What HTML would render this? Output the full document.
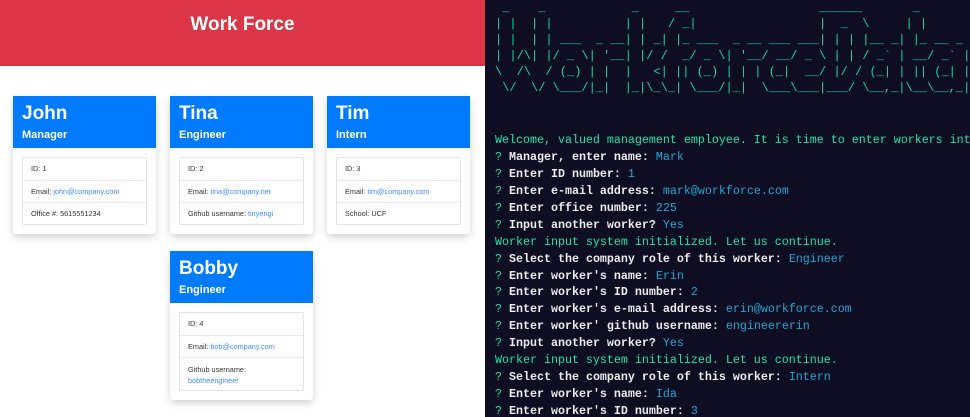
<!DOCTYPE html>
<html><head><meta charset="utf-8"><style>
*{margin:0;padding:0;box-sizing:border-box}
body{width:970px;height:417px;overflow:hidden;background:#fff;font-family:"Liberation Sans",sans-serif;position:relative}
.left{position:absolute;left:0;top:0;width:485px;height:417px;background:#fff}
.hdr{position:absolute;left:0;top:0;width:485px;height:66px;background:#dc3545;color:#fff;font-weight:bold;font-size:19px;text-align:center;line-height:50px}
.card{position:absolute;width:143px;background:#fff;box-shadow:0 3px 8px rgba(0,0,0,.18);border-radius:3px}
.ch{background:#007bff;color:#fff;padding:7px 9px 5px;height:52px}
.ch .n{font-size:19px;font-weight:bold;line-height:22px}
.ch .r{font-size:11px;font-weight:bold;margin-top:4px}
.cb{padding:9px 9px 9px}
ul{list-style:none;border:1px solid #e3e3e3;border-radius:2px}
li{font-size:7.3px;color:#333;padding:0 8px;height:22px;line-height:22px;border-top:1px solid #e8e8e8}
li:first-child{border-top:none}
li.t{height:33px;line-height:11px;padding-top:6px}
a{color:#3b8cff;text-decoration:none}
.term{position:absolute;left:485px;top:0;width:485px;height:417px;background:#0f0d22;font-family:"Liberation Mono",monospace;font-size:11.67px;white-space:pre;overflow:hidden}
.art{position:absolute;left:10px;top:0px;line-height:16px;font-size:12px;color:#17d9a0}
.log{position:absolute;left:10px;top:132px;line-height:16.94px}
.g{color:#1ce6a8}.w{color:#ececec;font-weight:bold}.c{color:#23a6d5}
</style></head><body>
<div class="left">
<div class="hdr">Work Force</div>
<div class="card" style="left:13px;top:96px"><div class="ch"><div class="n">John</div><div class="r">Manager</div></div><div class="cb"><ul><li>ID: 1</li><li>Email: <a>john@company.com</a></li><li>Office #: 5615551234</li></ul></div></div>
<div class="card" style="left:170px;top:96px"><div class="ch"><div class="n">Tina</div><div class="r">Engineer</div></div><div class="cb"><ul><li>ID: 2</li><li>Email: <a>tina@company.net</a></li><li>Github username: <a>tinyengi</a></li></ul></div></div>
<div class="card" style="left:327px;top:96px"><div class="ch"><div class="n">Tim</div><div class="r">Intern</div></div><div class="cb"><ul><li>ID: 3</li><li>Email: <a>tim@company.com</a></li><li>School: UCF</li></ul></div></div>
<div class="card" style="left:170px;top:251px"><div class="ch"><div class="n">Bobby</div><div class="r">Engineer</div></div><div class="cb"><ul><li>ID: 4</li><li>Email: <a>bob@company.com</a></li><li class="t">Github username:<br><a>bobtheengineer</a></li></ul></div></div>
</div>
<div class="term">
<div class="art"> _    _            _     __                  ______       _        
| |  | |          | |   / _|                 |  _  \     | |       
| |  | | ___  _ __| | _| |_ ___  _ __ ___ ___| | | |__ _| |_ __ _ 
| |/\| |/ _ \| '__| |/ /  _/ _ \| '__/ __/ _ \ | | / _` | __/ _` |
\  /\  / (_) | |  |   <| || (_) | | | (_|  __/ |/ / (_| | || (_| |
 \/  \/ \___/|_|  |_|\_\_| \___/|_|  \___\___|___/ \__,_|\__\__,_|</div>
<div class="log"><span class="g">Welcome, valued management employee. It is time to enter workers into the system.</span>
<span class="g">?</span> <span class="w">Manager, enter name:</span> <span class="c">Mark</span>
<span class="g">?</span> <span class="w">Enter ID number:</span> <span class="c">1</span>
<span class="g">?</span> <span class="w">Enter e-mail address:</span> <span class="c">mark@workforce.com</span>
<span class="g">?</span> <span class="w">Enter office number:</span> <span class="c">225</span>
<span class="g">?</span> <span class="w">Input another worker?</span> <span class="c">Yes</span>
<span class="g">Worker input system initialized. Let us continue.</span>
<span class="g">?</span> <span class="w">Select the company role of this worker:</span> <span class="c">Engineer</span>
<span class="g">?</span> <span class="w">Enter worker's name:</span> <span class="c">Erin</span>
<span class="g">?</span> <span class="w">Enter worker's ID number:</span> <span class="c">2</span>
<span class="g">?</span> <span class="w">Enter worker's e-mail address:</span> <span class="c">erin@workforce.com</span>
<span class="g">?</span> <span class="w">Enter worker' github username:</span> <span class="c">engineererin</span>
<span class="g">?</span> <span class="w">Input another worker?</span> <span class="c">Yes</span>
<span class="g">Worker input system initialized. Let us continue.</span>
<span class="g">?</span> <span class="w">Select the company role of this worker:</span> <span class="c">Intern</span>
<span class="g">?</span> <span class="w">Enter worker's name:</span> <span class="c">Ida</span>
<span class="g">?</span> <span class="w">Enter worker's ID number:</span> <span class="c">3</span></div>
</div>
</body></html>
